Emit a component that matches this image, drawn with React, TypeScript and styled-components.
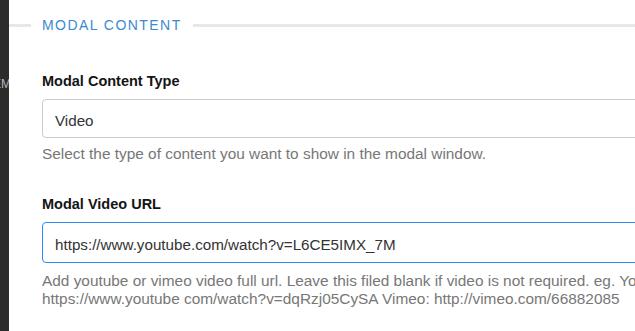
import styled, { createGlobalStyle } from "styled-components";

const GlobalStyle = createGlobalStyle`
  html, body {
    margin: 0;
    padding: 0;
    background: #ffffff;
    overflow: hidden;
  }
  body {
    font-family: "Liberation Sans", Arial, Helvetica, sans-serif;
  }
`;

const Page = styled.div`
  display: flex;
  width: 635px;
  height: 331px;
  overflow: hidden;
`;

const SideBar = styled.aside`
  flex: 0 0 9px;
  background: #2b2b2b;
  overflow: hidden;
  display: flex;
  flex-direction: column;
  align-items: flex-end;
  padding-top: 77px;
  box-sizing: border-box;
`;

const SideLabel = styled.span`
  font-size: 12px;
  line-height: 14px;
  color: #b9b9b9;
  white-space: nowrap;
  margin-right: -2px;
`;

const Panel = styled.main`
  flex: 0 0 740px;
  padding-top: 15px;
`;

const SectionHeader = styled.div`
  display: flex;
  align-items: center;
  gap: 11px;
  height: 20px;
`;

const HeaderLine = styled.span<{ $grow?: boolean }>`
  height: 3px;
  background: #e6e7ea;
  flex: ${(p) => (p.$grow ? "1 1 auto" : "0 0 22px")};
`;

const SectionTitle = styled.h3`
  margin: 0;
  font-size: 14px;
  line-height: 20px;
  font-weight: 400;
  letter-spacing: 1.45px;
  text-transform: uppercase;
  color: #3b8ad5;
`;

const Fields = styled.div`
  display: flex;
  flex-direction: column;
  padding: 36px 0 0 33px;
`;

const Field = styled.div<{ $gap: number }>`
  display: flex;
  flex-direction: column;
  margin-bottom: ${(p) => p.$gap}px;
`;

const Label = styled.label`
  font-size: 14.5px;
  line-height: 20px;
  font-weight: 700;
  color: #141414;
  margin-bottom: 8px;
`;

const TextInput = styled.input<{ $focused?: boolean; $height: number }>`
  box-sizing: border-box;
  height: ${(p) => p.$height}px;
  padding: 3px 12px 0;
  font-family: "Liberation Sans", Arial, Helvetica, sans-serif;
  font-size: 15.2px;
  color: #333333;
  background: #ffffff;
  border: 1px solid ${(p) => (p.$focused ? "#2a8cf2" : "#cccccc")};
  border-radius: 4px;
  outline: none;
`;

const Help = styled.p<{ $top: number }>`
  margin: ${(p) => p.$top}px 0 0;
  font-size: 15.4px;
  line-height: 18px;
  color: #777777;
`;

export default function App() {
  return (
    <Page>
      <GlobalStyle />
      <SideBar>
        <SideLabel>ITEM</SideLabel>
      </SideBar>
      <Panel>
        <SectionHeader>
          <HeaderLine />
          <SectionTitle>Modal Content</SectionTitle>
          <HeaderLine $grow />
        </SectionHeader>
        <Fields>
          <Field $gap={31}>
            <Label>Modal Content Type</Label>
            <TextInput $height={39} defaultValue="Video" readOnly />
            <Help $top={7}>
              Select the type of content you want to show in the modal window.
            </Help>
          </Field>
          <Field $gap={0}>
            <Label>Modal Video URL</Label>
            <TextInput
              $focused
              $height={41}
              defaultValue="https://www.youtube.com/watch?v=L6CE5IMX_7M"
              readOnly
            />
            <Help $top={9}>
              Add youtube or vimeo video full url. Leave this filed blank if
              video is not required. eg. Youtube: https://www.youtube
              com/watch?v=dqRzj05CySA Vimeo: http://vimeo.com/66882085
            </Help>
          </Field>
        </Fields>
      </Panel>
    </Page>
  );
}
